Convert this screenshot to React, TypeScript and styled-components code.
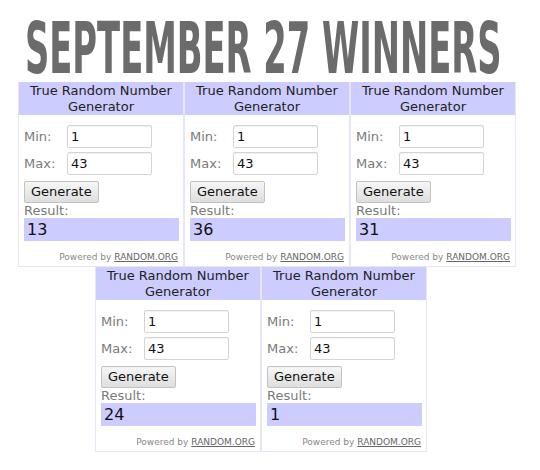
import React, { useLayoutEffect, useRef, useState } from "react";
import styled, { createGlobalStyle } from "styled-components";

const Global = createGlobalStyle`
  html, body { margin: 0; padding: 0; background: #ffffff; }
  body { width: 540px; height: 470px; overflow: hidden; }
`;

const Page = styled.div`
  width: 540px;
  height: 470px;
  display: flex;
  flex-direction: column;
`;

const TitleWrap = styled.div`
  height: 82px;
  padding: 19px 0 0 25px;
  box-sizing: border-box;
`;

const Title = styled.h1`
  margin: 0;
  display: inline-block;
  font-family: "DejaVu Sans Condensed", "DejaVu Sans", sans-serif;
  font-stretch: condensed;
  font-weight: bold;
  color: #6b6b6b;
  white-space: nowrap;
  transform-origin: 0 0;
`;

const Row = styled.div<{ $left: number }>`
  display: flex;
  padding-left: ${(p) => p.$left}px;
`;

const Card = styled.div`
  width: 166px;
  box-sizing: border-box;
  border: 1px solid #e6e6f4;
  border-top: none;
  display: flex;
  flex-direction: column;
  font-family: "DejaVu Sans", Verdana, sans-serif;
  background: #fff;
`;

const Header = styled.div`
  background: #ccccff;
  height: 33px;
  display: flex;
  flex-direction: column;
  align-items: center;
  justify-content: center;
  text-align: center;
  font-size: 13px;
  line-height: 16px;
  color: #222;
`;

const HeaderLine = styled.span`
  display: block;
`;

const Body = styled.div`
  padding: 10px 4px 0 5px;
  display: flex;
  flex-direction: column;
`;

const Field = styled.div`
  display: grid;
  grid-template-columns: 43px 85px;
  align-items: center;
  margin-bottom: 4px;
`;

const Label = styled.span`
  font-size: 13px;
  color: #7a7a7a;
`;

const Input = styled.div`
  height: 23px;
  box-sizing: border-box;
  border: 1px solid #d4d4d4;
  border-radius: 2px;
  box-shadow: inset 0 1px 1px rgba(0, 0, 0, 0.06);
  font-size: 13px;
  line-height: 21px;
  padding-left: 3px;
  color: #111;
`;

const Button = styled.div`
  margin-top: 2px;
  align-self: flex-start;
  height: 22px;
  box-sizing: border-box;
  padding: 0 6px;
  border: 1px solid #c2c2c2;
  border-radius: 2px;
  background: linear-gradient(#f6f6f6, #dedede);
  font-size: 13px;
  line-height: 20px;
  color: #111;
`;

const ResultLabel = styled.div`
  font-size: 13px;
  line-height: 15px;
  color: #7a7a7a;
`;

const ResultBox = styled.div`
  background: #ccccff;
  height: 23px;
  font-size: 16px;
  line-height: 23px;
  padding-left: 3px;
  color: #111;
`;

const Powered = styled.div`
  text-align: right;
  font-size: 9px;
  color: #888;
  padding: 11px 1px 0 0;
  height: 25px;
  box-sizing: border-box;
`;

const OrgLink = styled.span`
  color: #666;
  text-decoration: underline;
`;

function Widget({ result }: { result: string }) {
  return (
    <Card>
      <Header>
        <HeaderLine>True Random Number</HeaderLine>
        <HeaderLine>Generator</HeaderLine>
      </Header>
      <Body>
        <Field>
          <Label>Min:</Label>
          <Input>1</Input>
        </Field>
        <Field>
          <Label>Max:</Label>
          <Input>43</Input>
        </Field>
        <Button>Generate</Button>
        <ResultLabel>Result:</ResultLabel>
        <ResultBox>{result}</ResultBox>
        <Powered>
          Powered by <OrgLink>RANDOM.ORG</OrgLink>
        </Powered>
      </Body>
    </Card>
  );
}

const BASE = 72;

export default function App() {
  const ref = useRef<HTMLHeadingElement>(null);
  const [s, setS] = useState(1);
  useLayoutEffect(() => {
    if (ref.current) {
      const w = ref.current.offsetWidth;
      if (w > 0) setS(477 / w);
    }
  }, []);
  const measured = s !== 1;
  return (
    <Page>
      <Global />
      <TitleWrap>
        <Title
          ref={ref}
          style={
            measured
              ? {
                  fontSize: `${BASE * s}px`,
                  lineHeight: `${BASE * s * 0.8}px`,
                  transform: `scaleY(${1 / s})`,
                }
              : { fontSize: `${BASE}px`, lineHeight: `${BASE * 0.8}px` }
          }
        >
          SEPTEMBER 27 WINNERS
        </Title>
      </TitleWrap>
      <Row $left={18}>
        <Widget result="13" />
        <Widget result="36" />
        <Widget result="31" />
      </Row>
      <Row $left={95}>
        <Widget result="24" />
        <Widget result="1" />
      </Row>
    </Page>
  );
}
